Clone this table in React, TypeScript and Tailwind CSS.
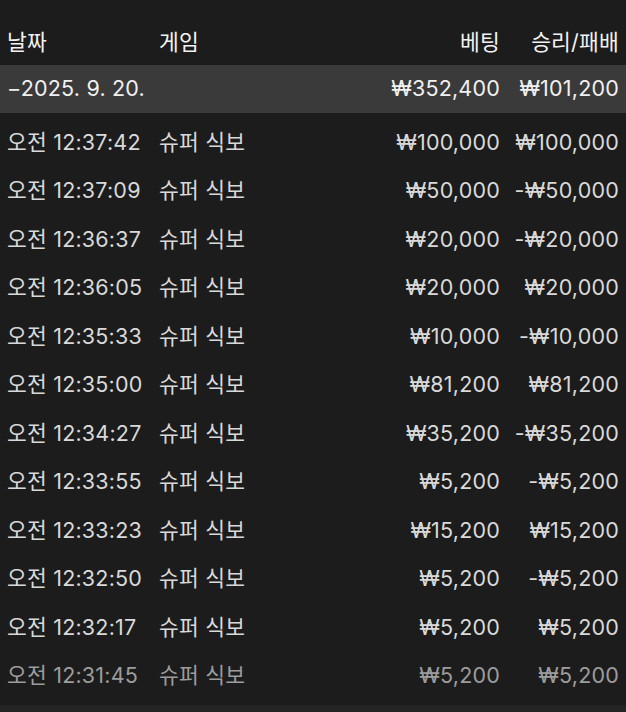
import React from "react";

const rows: [string, string, string][] = [
  ["오전 12:37:42", "₩100,000", "₩100,000"],
  ["오전 12:37:09", "₩50,000", "-₩50,000"],
  ["오전 12:36:37", "₩20,000", "-₩20,000"],
  ["오전 12:36:05", "₩20,000", "₩20,000"],
  ["오전 12:35:33", "₩10,000", "-₩10,000"],
  ["오전 12:35:00", "₩81,200", "₩81,200"],
  ["오전 12:34:27", "₩35,200", "-₩35,200"],
  ["오전 12:33:55", "₩5,200", "-₩5,200"],
  ["오전 12:33:23", "₩15,200", "₩15,200"],
  ["오전 12:32:50", "₩5,200", "-₩5,200"],
  ["오전 12:32:17", "₩5,200", "₩5,200"],
  ["오전 12:31:45", "₩5,200", "₩5,200"],
];

export default function App() {
  return (
    <div
      className="w-[626px] h-[712px] bg-[#1c1c1c] overflow-hidden flex flex-col text-[21.5px] leading-none tracking-[0.2px]"
      style={{ fontFamily: '"Inter", "Noto Sans CJK KR", sans-serif' }}
    >
      <div className="h-[65px] pt-[20px] px-[7px] flex items-center text-[#f2f2f2] shrink-0">
        <div className="w-[152px]">날짜</div>
        <div className="flex-1">게임</div>
        <div className="w-[150px] text-right">베팅</div>
        <div className="w-[119px] text-right">승리/패배</div>
      </div>
      <div className="h-[48px] bg-[#3a3a3a] px-[7px] flex items-center text-[#f0f0f0] shrink-0">
        <div className="flex-1">−2025. 9. 20.</div>
        <div className="w-[150px] text-right">₩352,400</div>
        <div className="w-[119px] text-right">₩101,200</div>
      </div>
      <div className="pt-[5px] flex flex-col flex-1">
        {rows.map((r, i) => (
          <div
            key={i}
            className={
              "h-[48.5px] px-[7px] flex items-center shrink-0 " +
              (i === rows.length - 1 ? "text-[#9c9c9c]" : "text-[#d9d9d9]")
            }
          >
            <div className="w-[152px]">{r[0]}</div>
            <div className="flex-1">슈퍼 식보</div>
            <div className="w-[150px] text-right">{r[1]}</div>
            <div className="w-[119px] text-right">{r[2]}</div>
          </div>
        ))}
      </div>
      <div className="h-[7px] bg-[#242424] shrink-0" />
    </div>
  );
}
